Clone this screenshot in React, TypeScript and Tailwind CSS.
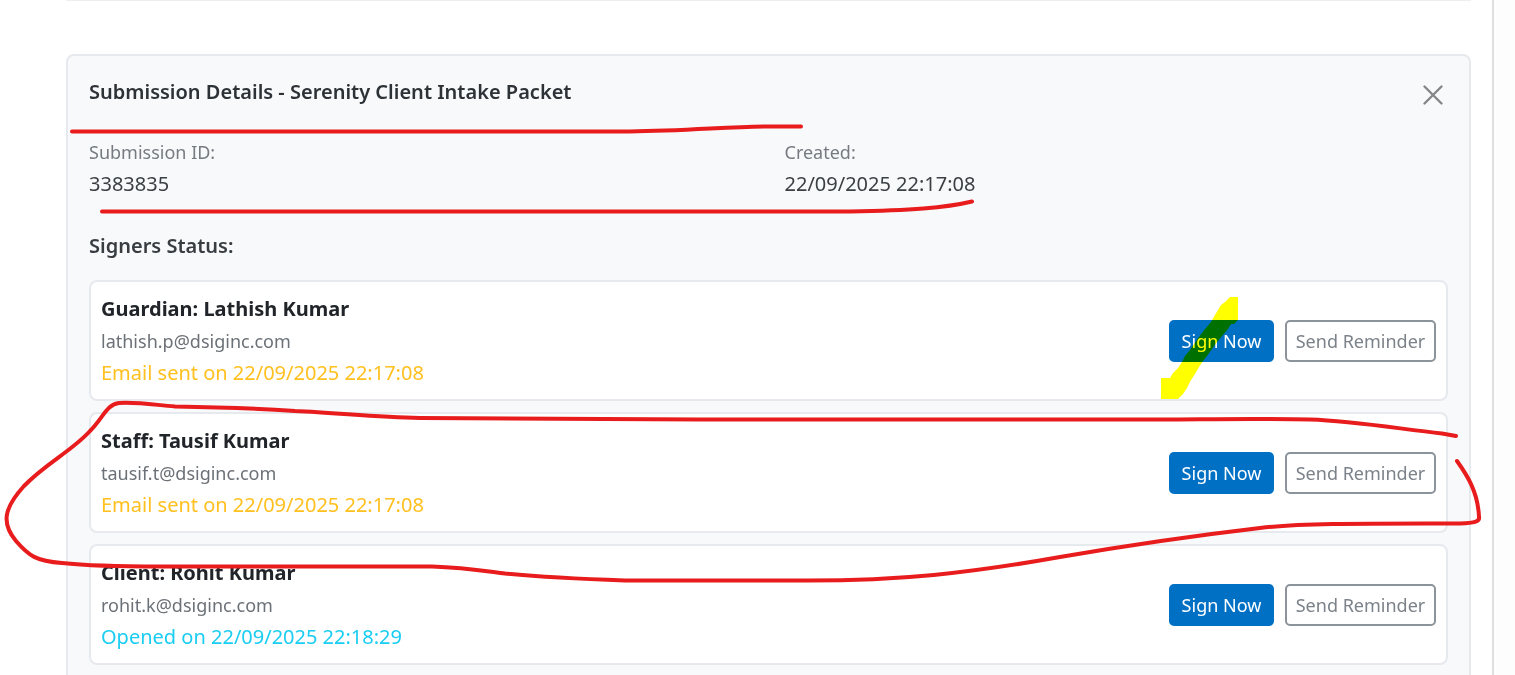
type Signer = {
  role: string;
  name: string;
  email: string;
  status: string;
  tone: string;
};

const signers: Signer[] = [
  {
    role: 'Guardian',
    name: 'Lathish Kumar',
    email: 'lathish.p@dsiginc.com',
    status: 'Email sent on 22/09/2025 22:17:08',
    tone: 'text-[#ffc020]',
  },
  {
    role: 'Staff',
    name: 'Tausif Kumar',
    email: 'tausif.t@dsiginc.com',
    status: 'Email sent on 22/09/2025 22:17:08',
    tone: 'text-[#ffc020]',
  },
  {
    role: 'Client',
    name: 'Rohit Kumar',
    email: 'rohit.k@dsiginc.com',
    status: 'Opened on 22/09/2025 22:18:29',
    tone: 'text-[#1acdf2]',
  },
];

function Field({ label, value }: { label: string; value: string }) {
  return (
    <div>
      <dt className="text-[18px] leading-8 text-[#757b81]">{label}</dt>
      <dd className="text-[20px] leading-8 text-[#3a3f44]">{value}</dd>
    </div>
  );
}

function SignerCard({ signer }: { signer: Signer }) {
  return (
    <li className="flex items-center justify-between rounded-lg border-2 border-[#e6e9ed] bg-white px-[10px] pt-[11px] pb-[10px]">
      <div className="leading-8">
        <p className="text-[20px] font-bold text-[#212529]">
          {signer.role}: {signer.name}
        </p>
        <p className="text-[18px] text-[#6b7177]">{signer.email}</p>
        <p className={`text-[20px] ${signer.tone}`}>{signer.status}</p>
      </div>
      <div className="flex gap-[11px] text-[18px] leading-7">
        <button
          type="button"
          className="h-[42px] w-[105px] rounded-[5px] bg-[#0070c5] text-white"
        >
          Sign Now
        </button>
        <button
          type="button"
          className="h-[42px] w-[151px] rounded-[5px] border-2 border-[#8c939a] bg-white text-[#7b8289]"
        >
          Send Reminder
        </button>
      </div>
    </li>
  );
}

function Annotations() {
  return (
    <>
      <svg
        className="pointer-events-none absolute top-0 left-0 mix-blend-multiply"
        width="1515"
        height="675"
        viewBox="0 0 1515 675"
        aria-hidden="true"
      >
        <path
          fill="#ffff00"
          d="M1230 297H1238V320L1234 324H1231L1228 329L1222 336L1217 342L1212 349L1207 356L1203 361L1199 367L1195 374L1191 380L1187 388L1183 394L1178 399H1161V378H1170L1173 373L1178 368L1182 362L1185 356L1190 350L1194 344L1199 337L1205 329L1211 322L1215 315L1218 310L1221 305L1225 302Z"
        />
      </svg>
      <svg
        className="pointer-events-none absolute top-0 left-0"
        width="1515"
        height="675"
        viewBox="0 0 1515 675"
        fill="none"
        stroke="#e81c1c"
        strokeWidth="4"
        strokeLinecap="round"
        strokeLinejoin="round"
        aria-hidden="true"
      >
        <path d="M72 131.500H630C690 131 735 126 775 126.500H801" />
        <path d="M102 211.500H850C910 210.500 945 208 972 201.500" />
        <path d="M1456 436L1442 433.500C1400 429 1355 421 1310 419.500C1260 418 1200 419.500 1130 419.500H700C640 418.500 580 418 420 418C375 417 340 413 295 411C250 408 210 407 175 406.500C155 405 140 402 119 403C107 404 103 418 90 431C72 451 46 463 24 486C4 508 1 523 16 541C29 556 36 561 62 563C90 566 120 566.500 160 566.500H432C465 567.500 485 571 505 573.500C540 577 580 579 625 580.500H800C900 581 970 573 1060 557C1130 545 1200 535 1260 528C1300 523 1370 523.500 1460 523.500C1474 523 1480 522 1479 517C1478 492 1467 475 1457 461" />
      </svg>
    </>
  );
}

export default function App() {
  return (
    <div className="relative h-screen overflow-hidden bg-[#fdfdfd] pr-[21px] font-['Noto_Sans','Open_Sans',sans-serif]">
      <main className="min-h-full border-r-2 border-[#dedfe1] bg-white pr-[21px] pl-[66px]">
        <hr className="border-t border-[#eeeeef]" />
        <section className="mt-[53px] rounded-lg border-2 border-[#e6e9ed] bg-[#f8f9fb] px-[21px] pt-5 pb-6">
          <header className="flex items-start justify-between">
            <h1 className="text-[20px] leading-8 font-semibold text-[#2d3237]">
              Submission Details - Serenity Client Intake Packet
            </h1>
            <button type="button" aria-label="Close" className="mt-1 p-1">
              <svg
                width="22"
                height="22"
                viewBox="0 0 22 22"
                fill="none"
                stroke="#858687"
                strokeWidth="2.4"
                strokeLinecap="round"
                aria-hidden="true"
              >
                <path d="M2.500 2.500L19.500 19.500M19.500 2.500L2.500 19.500" />
              </svg>
            </button>
          </header>
          <dl className="mt-[26px] grid grid-cols-2 gap-x-8">
            <Field label="Submission ID:" value="3383835" />
            <Field label="Created:" value="22/09/2025 22:17:08" />
          </dl>
          <h2 className="mt-[30px] text-[20px] leading-8 font-semibold text-[#383d42]">
            Signers Status:
          </h2>
          <ul className="mt-[18px] flex flex-col gap-[11px]">
            {signers.map((signer) => (
              <SignerCard key={signer.email} signer={signer} />
            ))}
          </ul>
        </section>
      </main>
      <Annotations />
    </div>
  );
}
